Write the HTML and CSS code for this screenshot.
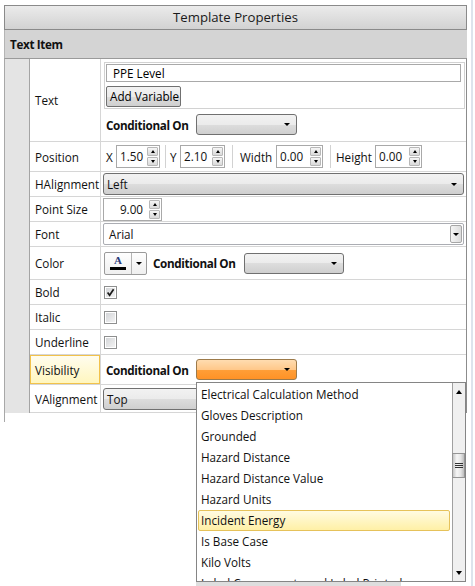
FILE: index.html
```html
<!DOCTYPE html>
<html>
<head>
<meta charset="utf-8">
<title>Template Properties</title>
<link rel="stylesheet" href="styles.css">
</head>
<body>
<div class="page">
  <div class="panel">
    <div class="title">Template Properties</div>
    <div class="section">Text Item</div>
    <div class="grid">
      <div class="indent"></div>
      <div class="rows">
        <div class="row h-text">
          <div class="label">Text</div>
          <div class="value v-text">
            <div class="tbox">
              <div class="tinput">PPE Level</div>
              <div class="btn">Add Variable</div>
            </div>
            <div class="cond">
              <span class="condlbl">Conditional On</span>
              <div class="combo c100 h21"><span class="arrow"></span></div>
            </div>
          </div>
        </div>
        <div class="row h-pos">
          <div class="label">Position</div>
          <div class="value">
            <div class="pg pg1">
              <span class="pl w10">X</span>
              <div class="spin s44"><span class="num">1.50</span><span class="btns"><span class="sb"><i class="up"></i></span><span class="sb"><i class="dn"></i></span></span></div>
            </div>
            <div class="pg pg2">
              <span class="pl w10">Y</span>
              <div class="spin s45"><span class="num">2.10</span><span class="btns"><span class="sb"><i class="up"></i></span><span class="sb"><i class="dn"></i></span></span></div>
            </div>
            <div class="pg pg3">
              <span class="pl w36">Width</span>
              <div class="spin s47"><span class="num">0.00</span><span class="btns"><span class="sb"><i class="up"></i></span><span class="sb"><i class="dn"></i></span></span></div>
            </div>
            <div class="pg pg4">
              <span class="pl w39">Height</span>
              <div class="spin s47"><span class="num">0.00</span><span class="btns"><span class="sb"><i class="up"></i></span><span class="sb"><i class="dn"></i></span></span></div>
            </div>
          </div>
        </div>
        <div class="row h24">
          <div class="label">HAlignment</div>
          <div class="value">
            <div class="combo full"><span class="ctext">Left</span><span class="arrow"></span></div>
          </div>
        </div>
        <div class="row h24">
          <div class="label">Point Size</div>
          <div class="value">
            <div class="spin s59 psize"><span class="num right">9.00</span><span class="btns"><span class="sb"><i class="up"></i></span><span class="sb"><i class="dn"></i></span></span></div>
          </div>
        </div>
        <div class="row h24">
          <div class="label">Font</div>
          <div class="value">
            <div class="ecombo"><span class="etext">Arial</span><span class="dd"><span class="arrow"></span></span></div>
          </div>
        </div>
        <div class="row h-color">
          <div class="label">Color</div>
          <div class="value">
            <div class="colorbtn">
              <span class="swatch"><span class="glyph">A</span><span class="bar"></span></span>
              <span class="cdd"><span class="arrow"></span></span>
            </div>
            <span class="condlbl c2">Conditional On</span>
            <div class="combo c100b h21"><span class="arrow"></span></div>
          </div>
        </div>
        <div class="row h24">
          <div class="label">Bold</div>
          <div class="value">
            <span class="chk"><svg width="9" height="9" viewBox="0 0 9 9"><path d="M1.6 4.6 L3.6 7.2 L7.6 1.2" fill="none" stroke="#1a1a1a" stroke-width="1.7"/></svg></span>
          </div>
        </div>
        <div class="row h24">
          <div class="label">Italic</div>
          <div class="value"><span class="chk"></span></div>
        </div>
        <div class="row h24">
          <div class="label">Underline</div>
          <div class="value"><span class="chk"></span></div>
        </div>
        <div class="row h-vis">
          <div class="label hl">Visibility</div>
          <div class="value">
            <div class="cond inl">
              <span class="condlbl">Conditional On</span>
              <div class="combo c100 h21 orange"><span class="arrow"></span></div>
            </div>
          </div>
        </div>
        <div class="row h-valign">
          <div class="label">VAlignment</div>
          <div class="value">
            <div class="combo full"><span class="ctext">Top</span><span class="arrow"></span></div>
          </div>
        </div>
      </div>
    </div>
    <div class="foot"></div>
  </div>
  <div class="edge"></div>
</div>

<div class="popup">
  <div class="list">
    <div class="item">Electrical Calculation Method</div>
    <div class="item">Gloves Description</div>
    <div class="item">Grounded</div>
    <div class="item">Hazard Distance</div>
    <div class="item">Hazard Distance Value</div>
    <div class="item">Hazard Units</div>
    <div class="item sel">Incident Energy</div>
    <div class="item">Is Base Case</div>
    <div class="item">Kilo Volts</div>
    <div class="item">Label Components and Label Printed</div>
  </div>
  <div class="sbar">
    <div class="sbtn"><i class="up big"></i></div>
    <div class="strack"><div class="thumb"><span class="grip"></span><span class="grip"></span><span class="grip"></span></div></div>
    <div class="sbtn"><i class="dn big"></i></div>
  </div>
</div>
<div class="pshadow"></div>
</body>
</html>
```
FILE: styles.css
```css
* { box-sizing: border-box; }
html, body { margin: 0; padding: 0; background: #fff; }
body {
  font-family: "Open Sans", "Noto Sans", sans-serif;
  font-size: 11.7px;
  color: #111;
  width: 475px;
  height: 586px;
  overflow: hidden;
  position: relative;
}
.page { display: flex; align-items: flex-start; }
.panel { margin: 5px 0 0 4px; width: 463px; }
.edge { width: 2px; height: 586px; margin-left: 4px; background: #dde4ec; }

.title {
  height: 25px;
  border: 1px solid #8a8a8a;
  background: linear-gradient(#ebebeb, #d2d2d2);
  text-align: center;
  font-size: 13.2px;
  line-height: 23px;
  color: #1a1a1a;
}
.section {
  height: 28px;
  border-left: 1px solid #b4b4b4;
  background: #d4d4d4;
  font-weight: 700;
  letter-spacing: -0.35px;
  padding-left: 5px;
  line-height: 28px;
  color: #111;
}
.grid {
  display: flex;
  border-top: 1px solid #9a9a9a;
  border-left: 1px solid #a8a8a8;
  border-right: 1px solid #8c8c8c;
}
.indent { width: 25px; background: #e4e4e4; border-right: 1px solid #a4a4a4; }
.rows { flex: 1; min-width: 0; }
.row { display: flex; border-bottom: 1px solid #d6d6d6; }
.h-text { height: 83px; }
.h-pos { height: 30px; }
.h24 { height: 25px; }
.h-color { height: 33px; }
.h-vis { height: 30px; }
.h-valign { height: 28px; }

.label {
  width: 71px;
  flex: none;
  border-right: 1px solid #d6d6d6;
  padding-left: 5px;
  display: flex;
  align-items: center;
  white-space: nowrap;
}
.label.hl {
  background: linear-gradient(#fffdf0, #fff6bd);
  box-shadow: inset 0 0 0 1px #f2c24a;
}
.value { flex: 1; min-width: 0; display: flex; align-items: center; }

/* Text row */
.v-text { flex-direction: column; align-items: stretch; justify-content: flex-start; padding: 3px 1px 0 3px; }
.tbox { height: 47px; border: 1px solid #d2d2d2; padding: 1px 3px 0 1px; }
.tinput { height: 18px; border: 1px solid #a9a9a9; padding-left: 6px; line-height: 16px; background: #fff; color: #000; }
.btn {
  margin-top: 4px;
  width: 75px;
  height: 21px;
  border: 1px solid #707070;
  border-radius: 2px;
  background: linear-gradient(#f2f2f2, #ebebeb 50%, #dddddd 50%, #cfcfcf);
  padding-left: 3px;
  line-height: 19px;
  white-space: nowrap;
  color: #000;
}
.cond { display: flex; align-items: center; margin-top: 5px; padding-left: 2px; }
.cond.inl { margin-top: 0; padding-left: 5px; }
.condlbl { width: 90px; flex: none; font-weight: 700; letter-spacing: -0.35px; white-space: nowrap; color: #111; }
.condlbl.c2 { margin-left: 6px; width: 91px; }

/* Combo boxes */
.combo {
  height: 22px;
  border: 1px solid #707070;
  border-radius: 3px;
  background: linear-gradient(#f2f2f2, #ebebeb 50%, #dddddd 50%, #cfcfcf);
  display: flex;
  align-items: center;
  padding-left: 3px;
  flex: none;
}
.combo.h21 { height: 21px; }
.combo.full { flex: 1; margin: 0 2px; }
.c100 { width: 101px; }
.c100b { width: 100px; }
.combo.orange {
  border-color: #9c7a4a;
  background: linear-gradient(#ffdcb0, #ffc88a 50%, #ff9f38 50%, #ff9226);
}
.ctext { flex: 1; white-space: nowrap; }
.arrow {
  margin-left: auto;
  margin-right: 6px;
  width: 0;
  height: 0;
  border-left: 3px solid transparent;
  border-right: 3px solid transparent;
  border-top: 3px solid #000;
}

/* editable combo */
.ecombo {
  flex: 1;
  margin: 0 2px;
  height: 22px;
  border: 1px solid #abadb3;
  border-radius: 2px;
  display: flex;
  background: #fff;
}
.etext { flex: 1; padding-left: 5px; line-height: 20px; }
.dd {
  width: 12px;
  margin: 1px;
  border: 1px solid #a6a6a6;
  border-radius: 2px;
  background: linear-gradient(90deg, #f4f4f4, #dcdcdc);
  display: flex;
  align-items: center;
  justify-content: center;
}
.dd .arrow { margin: 0; }

/* Position */
.pg { display: flex; align-items: center; height: 23px; flex: none; }
.pg1 { padding: 0 5px; border-right: 1px solid #d2d2d2; }
.pg2 { padding: 0 7px 0 4px; border-right: 1px solid #d2d2d2; }
.pg3 { padding: 0 7px; border-right: 1px solid #d2d2d2; }
.pg4 { padding-left: 5px; }
.pl { flex: none; white-space: nowrap; }
.w10 { width: 10px; }
.w36 { width: 36px; }
.w39 { width: 39px; }

.spin {
  display: flex;
  height: 23px;
  border: 1px solid #a9a9a9;
  background: #fff;
  flex: none;
}
.s44 { width: 44px; }
.s45 { width: 45px; }
.s47 { width: 47px; }
.s59 { width: 59px; }
.psize { margin-left: 2px; }
.num { flex: 1; padding-left: 3px; line-height: 21px; }
.num.right { text-align: right; padding-right: 6px; }
.btns { width: 12px; display: flex; flex-direction: column; gap: 1px; padding: 1px 1px 1px 0; }
.sb {
  flex: 1;
  border: 1px solid #b8b8b8;
  border-radius: 1px;
  background: linear-gradient(#f6f6f6, #d9d9d9);
  display: flex;
  align-items: center;
  justify-content: center;
}
.up, .dn { display: block; width: 0; height: 0; border-left: 2.5px solid transparent; border-right: 2.5px solid transparent; }
.up { border-bottom: 3px solid #000; }
.dn { border-top: 3px solid #000; }
.up.big, .dn.big { border-left-width: 3.5px; border-right-width: 3.5px; }
.up.big { border-bottom-width: 4px; }
.dn.big { border-top-width: 4px; }

/* Color button */
.colorbtn {
  margin-left: 3px;
  width: 43px;
  height: 23px;
  border: 1px solid #9a9a9a;
  border-radius: 2px;
  background: linear-gradient(#fefefe, #efefef);
  display: flex;
  flex: none;
}
.swatch {
  width: 27px;
  border-right: 1px solid #b4b4b4;
  display: flex;
  flex-direction: column;
  align-items: center;
  padding-top: 2px;
}
.glyph { font-family: "Liberation Serif", serif; font-weight: 700; font-size: 11px; line-height: 11px; color: #27397a; }
.bar { width: 16px; height: 3px; background: #000; margin-top: 1px; }
.cdd { flex: 1; display: flex; align-items: center; justify-content: center; }
.cdd .arrow { margin: 0; }

/* checkbox */
.chk {
  margin-left: 3px;
  width: 13px;
  height: 13px;
  border: 1px solid #8e8f8f;
  background: linear-gradient(135deg, #d0d2d5, #f6f6f6);
  box-shadow: inset 0 0 0 1px #fff;
  display: flex;
  align-items: center;
  justify-content: center;
}

.foot { height: 9px; border-left: 1px solid #a8a8a8; }

/* Dropdown popup */
.popup {
  position: absolute;
  left: 196px;
  top: 382px;
  width: 270px;
  height: 200px;
  border: 1px solid #858585;
  background: #fff;
  display: flex;
}
.list { flex: 1; padding: 1px 2px 0 1px; overflow: hidden; }
.item {
  height: 21px;
  border: 1px solid transparent;
  border-radius: 2px;
  padding-left: 2px;
  line-height: 19px;
  white-space: nowrap;
  color: #111;
}
.item.sel { border-color: #e6c25a; background: linear-gradient(#fffbe2, #fff0a6); }
.sbar { width: 13px; border-left: 1px solid #a0a0a0; background: #f0f0f0; display: flex; flex-direction: column; }
.sbtn { height: 17px; display: flex; align-items: center; justify-content: center; }
.strack { flex: 1; position: relative; }
.thumb {
  position: absolute;
  left: -1px;
  right: 0;
  top: 53px;
  height: 25px;
  border: 1px solid #959595;
  background: linear-gradient(90deg, #c6c6c6, #f6f6f6 35%, #e6e6e6 70%, #bdbdbd);
  display: flex;
  flex-direction: column;
  align-items: center;
  justify-content: center;
  gap: 1px;
}
.grip { width: 8px; height: 1px; background: #333; }
.pshadow { position: absolute; left: 196px; top: 582px; width: 205px; height: 4px; background: #dedede; }
```
